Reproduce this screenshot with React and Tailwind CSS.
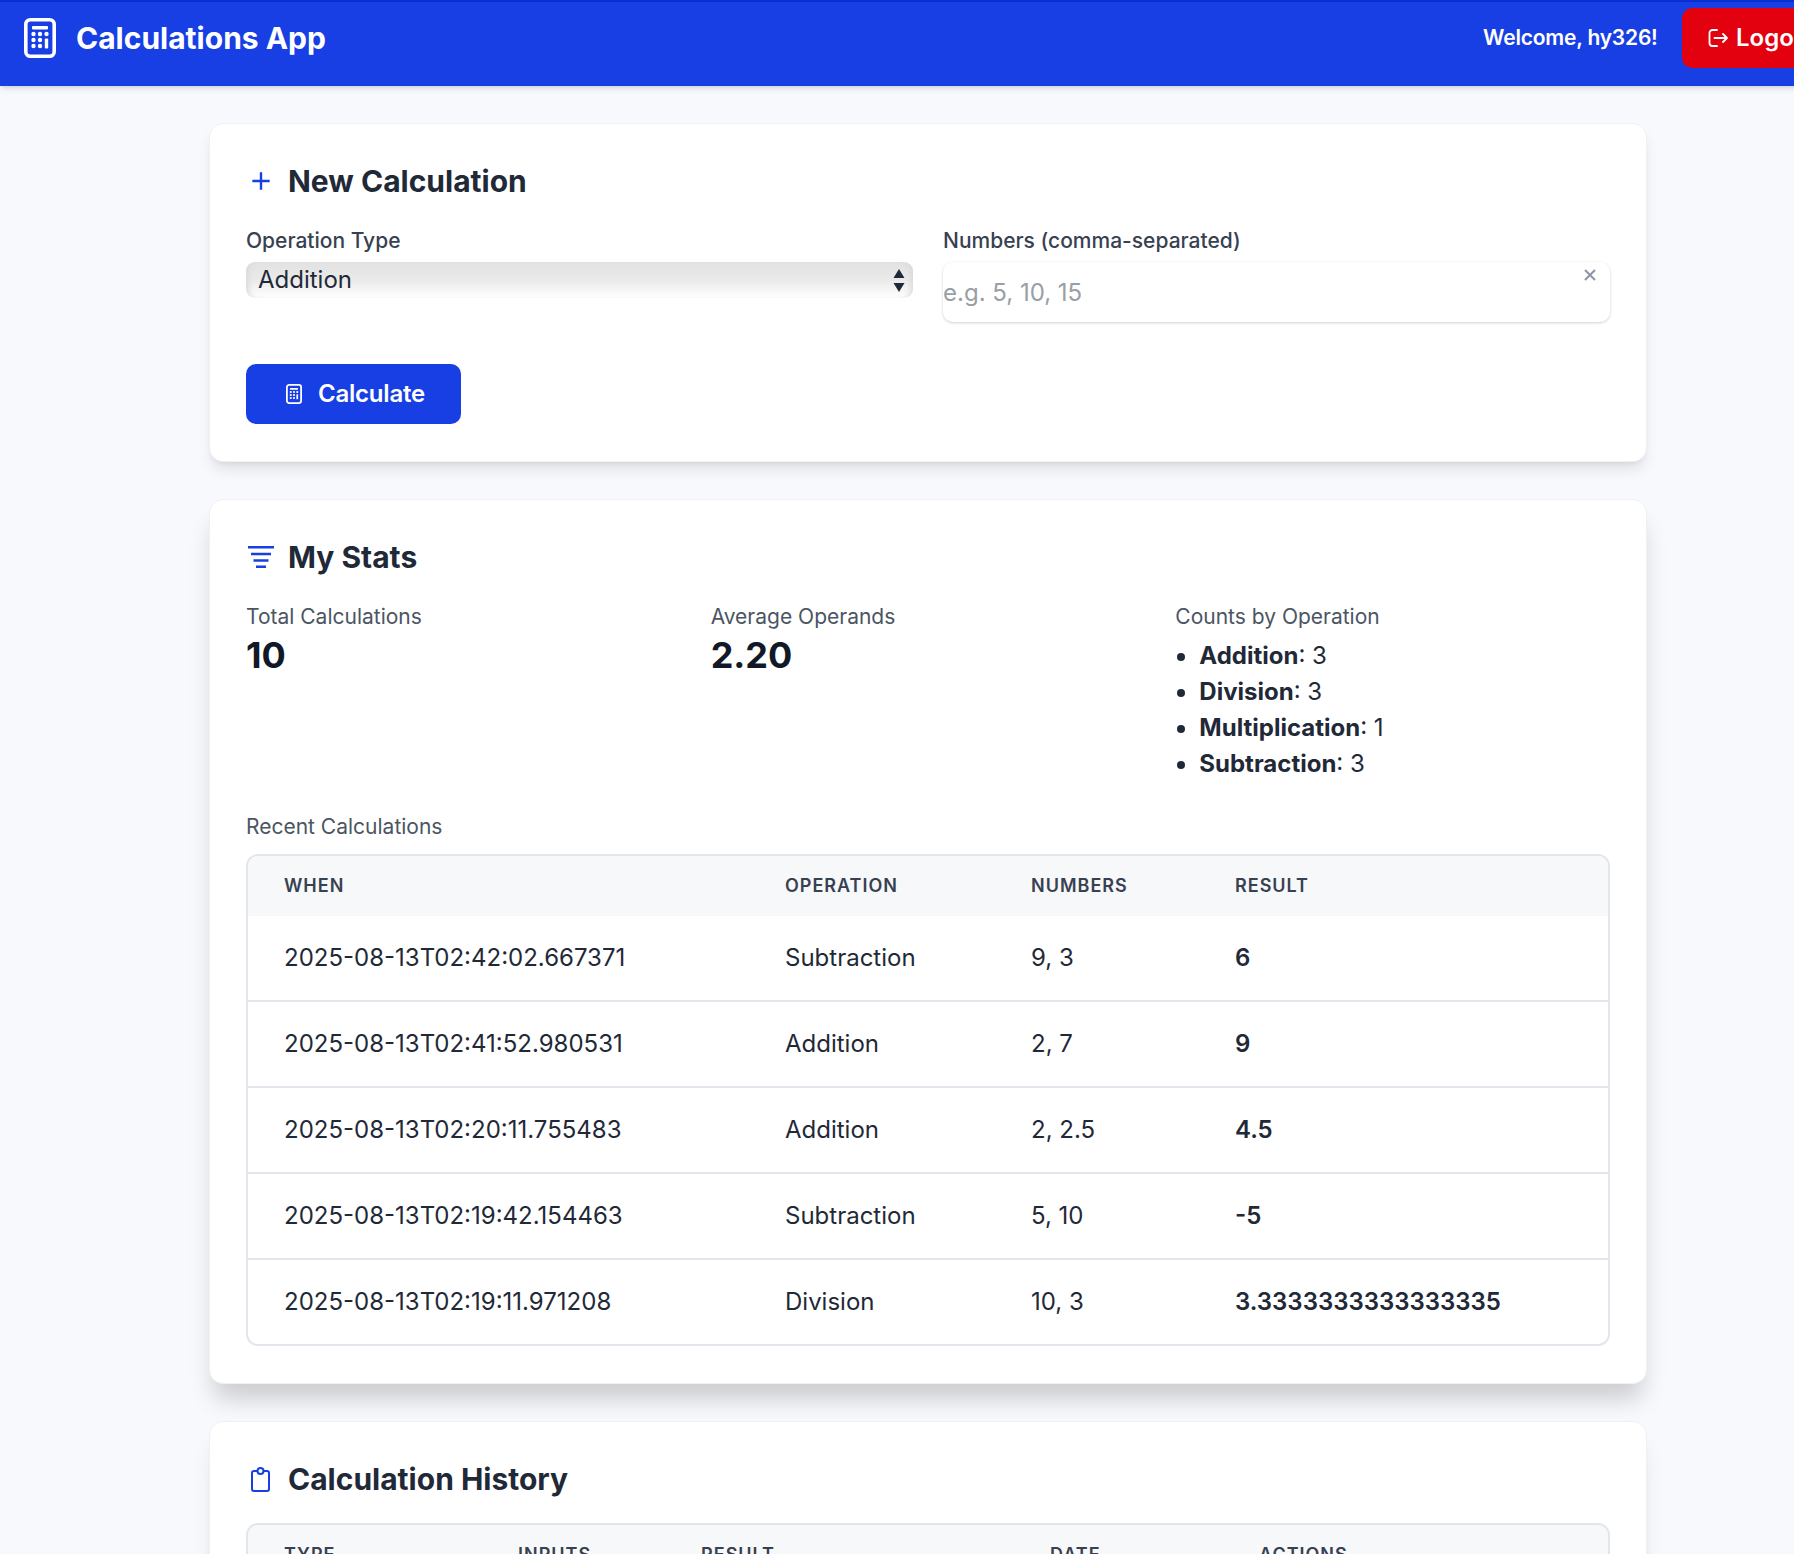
import React from 'react';

// Calculator outline, used in the header and on the submit button
function CalcIcon({ className }) {
  return (
    <svg className={className} viewBox="0 0 32 40" fill="none">
      <rect x="1.8" y="1.8" width="28.4" height="36.4" rx="4.5" stroke="currentColor" strokeWidth="3.6" />
      <rect x="8" y="8" width="16" height="3.4" rx="1" fill="currentColor" />
      {[16, 22, 28].map((y) => [9.5, 16, 22.5].map((x) => (
        x === 22.5 && y > 16 ? null : <circle key={`${x}-${y}`} cx={x} cy={y} r="2.2" fill="currentColor" />
      )))}
      <rect x="20.8" y="20.5" width="3.4" height="10" rx="1" fill="currentColor" />
    </svg>
  );
}

function StatsIcon({ className }) {
  return (
    <svg className={className} viewBox="0 0 26 22" fill="none" stroke="currentColor" strokeWidth="2.6">
      <path d="M0 1.3h26M3 8h20M5.5 14.5h15M8 20.7h10" />
    </svg>
  );
}

function ClipboardIcon({ className }) {
  return (
    <svg className={className} viewBox="0 0 19 25" fill="none" stroke="currentColor" strokeWidth="2">
      <path d="M6.5 4H3a2 2 0 0 0-2 2v16a2 2 0 0 0 2 2h13a2 2 0 0 0 2-2V6a2 2 0 0 0-2-2h-3.5" />
      <circle cx="9.5" cy="4" r="3" />
    </svg>
  );
}

function LogoutIcon({ className }) {
  return (
    <svg className={className} viewBox="0 0 20 18" fill="none" stroke="currentColor" strokeWidth="1.8" strokeLinecap="round" strokeLinejoin="round">
      <path d="M9 1H4.5A3 3 0 0 0 1.5 4v10a3 3 0 0 0 3 3H9" />
      <path d="M6.5 9H19M15 5l4 4-4 4" />
    </svg>
  );
}

function SectionTitle({ icon, children }) {
  return (
    <div className="flex items-center h-[44px] mb-[22px]">
      <span className="w-[42px] flex text-[#173fe4]">{icon}</span>
      <h2 className="text-[30px] leading-[44px] font-bold text-[#1f2937]">{children}</h2>
    </div>
  );
}

const recent = [
  ['2025-08-13T02:42:02.667371', 'Subtraction', '9, 3', '6'],
  ['2025-08-13T02:41:52.980531', 'Addition', '2, 7', '9'],
  ['2025-08-13T02:20:11.755483', 'Addition', '2, 2.5', '4.5'],
  ['2025-08-13T02:19:42.154463', 'Subtraction', '5, 10', '-5'],
  ['2025-08-13T02:19:11.971208', 'Division', '10, 3', '3.3333333333333335'],
];

const counts = [['Addition', 3], ['Division', 3], ['Multiplication', 1], ['Subtraction', 3]];

export default function App() {
  return (
    <div className="h-[1554px] overflow-hidden bg-[#f8f9fc] font-['Inter',sans-serif]">
      {/* Header */}
      <header className="relative z-10 w-[1900px] h-[86px] flex items-center bg-[#173fe4] border-t-2 border-[#0a2fd0] shadow-md text-white pl-[24px] pb-[12px]">
        <CalcIcon className="w-[32px] h-[40px]" />
        <h1 className="ml-[20px] text-[30px] font-bold">Calculations App</h1>
        <span className="absolute left-[1483px] top-[20px] text-[21px] leading-[32px] font-semibold tracking-[-0.2px]">Welcome, hy326!</span>
        <button className="absolute left-[1682px] top-[6px] w-[200px] h-[60px] flex items-center pl-[26px] gap-[8px] rounded-[10px] bg-[#e3000f] text-[24px] font-semibold">
          <LogoutIcon className="w-[20px] h-[18px] shrink-0" />
          Logout
        </button>
      </header>

      <main className="w-[1438px] ml-[209px] pt-[37px] flex flex-col gap-[37px]">
        {/* New Calculation */}
        <section className="bg-white border border-[#f0f1f5] rounded-[14px] shadow-lg h-[339px] px-[36px] pt-[35px]">
          <SectionTitle icon={<svg className="w-[26px] h-[26px] ml-[2px]" viewBox="0 0 24 24" fill="none" stroke="currentColor" strokeWidth="2.2"><path d="M12 4v16M4 12h16" /></svg>}>New Calculation</SectionTitle>
          <div className="grid grid-cols-2 gap-[30px]">
            <div>
              <label className="block text-[21px] leading-[32px] font-medium text-[#374151]">Operation Type</label>
              <div className="relative mt-[5px] h-[36px] rounded-[9px] bg-gradient-to-b from-[#e2e2e2] via-[#eaeaea] to-white shadow-[inset_6px_0_6px_-4px_#d8d8d8,inset_-6px_0_6px_-4px_#d8d8d8] flex items-center pl-[12px] text-[24px] text-[#1f2937]">
                Addition
                <svg className="absolute right-[8px] top-[7px] w-[12px] h-[23px]" viewBox="0 0 12 23" fill="#1f2937"><path d="M6 0l5.5 9H.5zM6 23L.5 14h11z" /></svg>
              </div>
            </div>
            <div>
              <label className="block text-[21px] leading-[32px] font-medium text-[#374151]">Numbers (comma-separated)</label>
              <div className="relative mt-[5px] h-[60px] rounded-[10px] bg-white shadow-[0_1px_3px_rgba(0,0,0,0.18)]">
                <input placeholder="e.g. 5, 10, 15" className="w-full h-full bg-transparent outline-none text-[24px] placeholder:text-[#9a9ea6]" />
                <svg className="absolute right-[14px] top-[7px] w-[12px] h-[12px]" viewBox="0 0 12 12" stroke="#8d95a5" strokeWidth="2"><path d="M1 1l10 10M11 1L1 11" /></svg>
              </div>
            </div>
          </div>
          <button className="mt-[42px] w-[215px] h-[60px] pl-[4px] rounded-[10px] bg-[#173fe4] text-white flex items-center justify-center gap-[16px] text-[24px] font-semibold tracking-[-0.2px]">
            <CalcIcon className="w-[16px] h-[20px]" />
            Calculate
          </button>
        </section>

        {/* My Stats */}
        <section className="bg-white border border-[#f0f1f5] rounded-[14px] shadow-[0_20px_25px_-5px_rgba(0,0,0,0.18)] h-[885px] px-[36px] pt-[35px]">
          <SectionTitle icon={<StatsIcon className="w-[26px] h-[22px] ml-[2px]" />}>My Stats</SectionTitle>
          <div className="grid grid-cols-3 gap-[30px] h-[210px]">
            <div>
              <div className="text-[21px] leading-[32px] text-[#4b5563]">Total Calculations</div>
              <div className="text-[36px] leading-[44px] font-bold text-[#111827]">10</div>
            </div>
            <div>
              <div className="text-[21px] leading-[32px] text-[#4b5563]">Average Operands</div>
              <div className="text-[36px] leading-[44px] font-bold text-[#111827]">2.20</div>
            </div>
            <div>
              <div className="text-[21px] leading-[32px] text-[#4b5563]">Counts by Operation</div>
              <ul className="mt-[5px] list-disc pl-[24px] text-[24px] leading-[36px] text-[#1f2937]">
                {counts.map(([name, n]) => (
                  <li key={name}><b className="font-bold">{name}</b>: {n}</li>
                ))}
              </ul>
            </div>
          </div>
          <div className="text-[21px] leading-[32px] text-[#4b5563] mb-[11px]">Recent Calculations</div>
          <div className="border-2 border-[#e2e6ec] rounded-[12px] overflow-hidden">
            <table className="w-full border-collapse text-left table-fixed">
              <thead>
                <tr className="h-[60px] bg-[#f7f8fa] text-[18px] font-semibold tracking-[1px] text-[#374151]">
                  <th className="pl-[36px] pb-[2px] w-[537px] font-semibold">WHEN</th>
                  <th className="w-[246px] pb-[2px] font-semibold">OPERATION</th>
                  <th className="w-[204px] pb-[2px] font-semibold">NUMBERS</th>
                  <th className="pb-[2px] font-semibold">RESULT</th>
                </tr>
              </thead>
              <tbody>
                {recent.map(([when, op, nums, res], i) => (
                  <tr key={when} className={`${i === 0 || i === 4 ? 'h-[85px]' : 'h-[86px]'} border-t-2 first:border-t-0 border-[#e2e6ec] text-[24px] text-[#1f2937]`}>
                    <td className="pl-[36px]">{when}</td>
                    <td>{op}</td>
                    <td>{nums}</td>
                    <td className="font-semibold">{res}</td>
                  </tr>
                ))}
              </tbody>
            </table>
          </div>
        </section>

        {/* Calculation History */}
        <section className="bg-white border border-[#f0f1f5] rounded-[14px] shadow-xl h-[300px] px-[36px] pt-[35px]">
          <SectionTitle icon={<ClipboardIcon className="w-[19px] h-[25px] ml-[5px]" />}>Calculation History</SectionTitle>
          <div className="border-2 border-[#e2e6ec] rounded-[12px] overflow-hidden">
            <div className="grid grid-cols-[234px_183px_349px_209px_1fr] h-[60px] items-center bg-[#f7f8fa] pl-[36px] pb-[2px] text-[18px] font-semibold tracking-[1px] text-[#374151]">
              <span>TYPE</span>
              <span>INPUTS</span>
              <span>RESULT</span>
              <span>DATE</span>
              <span>ACTIONS</span>
            </div>
          </div>
        </section>
      </main>
    </div>
  );
}
